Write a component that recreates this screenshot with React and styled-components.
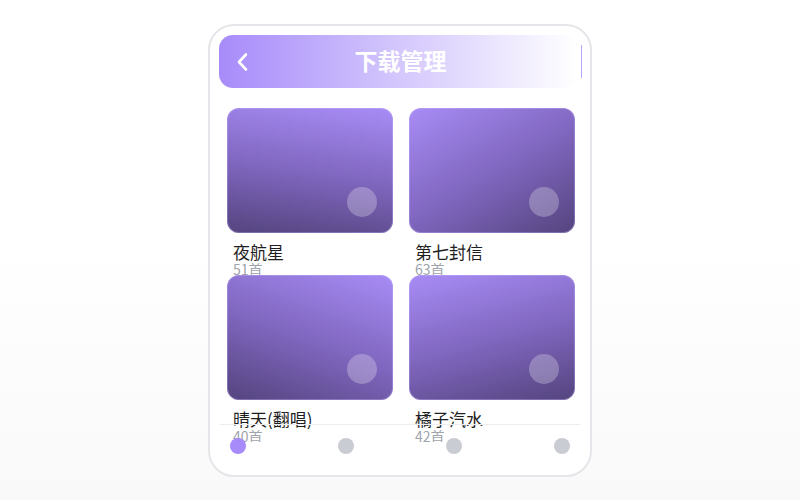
import React from "react";
import styled, { createGlobalStyle } from "styled-components";

const Global = createGlobalStyle`
  html, body { margin: 0; padding: 0; }
  body {
    min-height: 100vh;
    background: linear-gradient(180deg, #ffffff 0%, #ffffff 48%, #f9f9fa 100%);
    font-family: "Noto Sans CJK SC", "Noto Sans", sans-serif;
  }
`;

const Stage = styled.div`
  height: 500px;
  display: flex;
  align-items: center;
  justify-content: center;
`;

const Phone = styled.div`
  box-sizing: border-box;
  width: 384px;
  height: 453px;
  border: 2px solid #e6e6ea;
  border-radius: 26px;
  background: #ffffff;
  display: flex;
  flex-direction: column;
  overflow: hidden;
`;

const HeaderRow = styled.div`
  margin: 9px 8px 0 9px;
  height: 53px;
  display: flex;
  align-items: center;
  gap: 4px;
`;

const Header = styled.div`
  position: relative;
  flex: 1;
  align-self: stretch;
  border-radius: 14px;
  background: linear-gradient(90deg, #a78bfa 0%, #cfc1fc 45%, #ffffff 100%);
  display: flex;
  align-items: center;
  justify-content: center;
`;

const Divider = styled.div`
  width: 1px;
  height: 33px;
  background: #b9a3fc;
`;

const Back = styled.div`
  position: absolute;
  left: 16px;
  top: 17px;
  width: 16px;
  height: 20px;
  display: flex;
`;

const Title = styled.div`
  color: #ffffff;
  font-size: 23px;
  font-weight: 700;
  margin-left: 5px;
  margin-top: -2px;
`;

const Content = styled.div`
  flex: 1;
  min-height: 0;
  padding: 20px 16px 0 17px;
`;

const Grid = styled.div`
  display: grid;
  grid-template-columns: 166px 166px;
  grid-auto-rows: 167px;
  column-gap: 16px;
`;

const Card = styled.div`
  overflow: hidden;
  display: flex;
  flex-direction: column;
`;

const Cover = styled.div`
  box-sizing: border-box;
  flex: none;
  height: 125px;
  border-radius: 12px;
  background: linear-gradient(${(p) => p.$angle}deg, #a88cf6 0%, #7d64bb 55%, #54447e 100%);
  box-shadow: inset 0 0 0 1px rgba(200, 185, 255, 0.35);
  display: flex;
  align-items: flex-end;
  justify-content: flex-end;
  padding: 0 16px 16px 0;
`;

const Disc = styled.div`
  width: 30px;
  height: 30px;
  border-radius: 50%;
  background: rgba(255, 255, 255, 0.26);
`;

const Info = styled.div`
  padding: 9px 6px 0 6px;
`;

const Name = styled.div`
  font-size: 17px;
  line-height: 19px;
  color: #1e1e1e;
  white-space: nowrap;
`;

const Count = styled.div`
  font-size: 14px;
  line-height: 16px;
  color: #a0a4ac;
`;

const TabBar = styled.div`
  height: 51px;
  box-sizing: border-box;
  margin: 0 10px;
  border-top: 1px solid #ececf1;
  padding: 13px 10px 0 10px;
  display: flex;
  justify-content: space-between;
  align-items: flex-start;
`;

const Dot = styled.div`
  width: 16px;
  height: 16px;
  border-radius: 50%;
  background: ${(p) => (p.$active ? "#a78bfa" : "#c9cdd3")};
`;

const items = [
  { name: "夜航星", count: "51首", angle: 188 },
  { name: "第七封信", count: "63首", angle: 150 },
  { name: "晴天(翻唱)", count: "40首", angle: 200 },
  { name: "橘子汽水", count: "42首", angle: 165 },
];

export default function App() {
  return (
    <>
      <Global />
      <Stage>
        <Phone>
          <HeaderRow>
            <Header>
              <Back>
                <svg width="16" height="20" viewBox="0 0 16 20">
                  <polyline
                    points="11,2.5 4,10 11,17.5"
                    fill="none"
                    stroke="#ffffff"
                    strokeWidth="2.6"
                    strokeLinecap="round"
                    strokeLinejoin="round"
                  />
                </svg>
              </Back>
              <Title>下载管理</Title>
            </Header>
            <Divider />
          </HeaderRow>
          <Content>
            <Grid>
              {items.map((it) => (
                <Card key={it.name}>
                  <Cover $angle={it.angle}>
                    <Disc />
                  </Cover>
                  <Info>
                    <Name>{it.name}</Name>
                    <Count>{it.count}</Count>
                  </Info>
                </Card>
              ))}
            </Grid>
          </Content>
          <TabBar>
            <Dot $active />
            <Dot />
            <Dot />
            <Dot />
          </TabBar>
        </Phone>
      </Stage>
    </>
  );
}
